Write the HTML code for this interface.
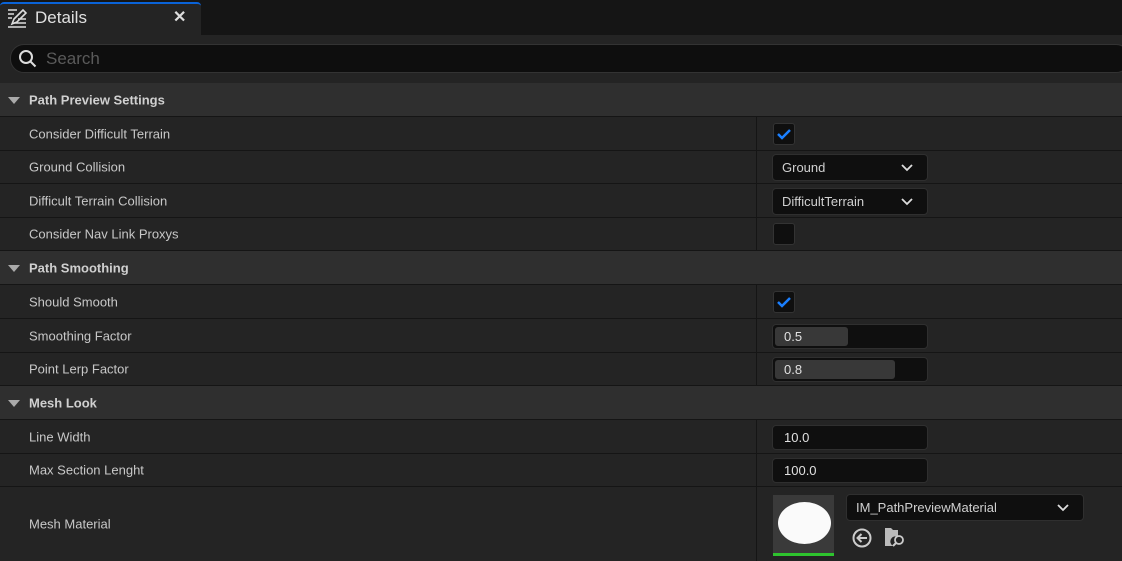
<!DOCTYPE html>
<html><head><style>
*{margin:0;padding:0;box-sizing:border-box}
body{width:1122px;height:561px;background:#151515;font-family:"Liberation Sans",sans-serif;overflow:hidden;position:relative;color:#c0c0c0}
.tab{position:absolute;left:0;top:2px;width:201px;height:33px;background:#242424;border-radius:4px 4px 0 0;border-top:2px solid #0a63d8}
.tab .t{position:absolute;left:35px;top:4px;font-size:17px;color:#e0e0e0}
.tab .x{position:absolute;left:173px;top:3px;font-size:16px;color:#ddd;font-weight:bold}
.sbar{position:absolute;left:0;top:35px;width:1122px;height:48px;background:#242424}
.sbox{position:absolute;left:10px;top:9px;width:1120px;height:29px;background:#0e0e0e;border:1px solid #333;border-radius:14px}
.sbox span{position:absolute;left:35px;top:4px;font-size:17px;color:#5a5a5a}
.row{position:absolute;left:0;width:1122px;background:#242424;border-bottom:1px solid #151515;font-size:13px}
.row .l{position:absolute;left:29px;top:50%;transform:translateY(-50%);color:#c8c8c8}
.row .d{position:absolute;left:756px;top:0;bottom:0;width:1px;background:#151515}
.hdr{background:#2f2f2f}
.hdr .l{font-weight:bold;color:#d0d0d0}
.tri{position:absolute;left:8px;top:50%;margin-top:-3px;width:0;height:0;border-left:6px solid transparent;border-right:6px solid transparent;border-top:7px solid #aaa}
.cb{position:absolute;left:773px;top:50%;margin-top:-11px;width:22px;height:22px;background:#0f0f0f;border:1px solid #333;border-radius:3px}
.dd{position:absolute;left:772px;top:50%;margin-top:-13px;width:156px;height:27px;background:#0f0f0f;border:1px solid #2f2f2f;border-radius:4px;color:#d0d0d0}
.dd span{position:absolute;left:9px;top:5px}
.dd svg{position:absolute;right:14px;top:9px}
.num{position:absolute;left:772px;top:50%;margin-top:-12px;width:156px;height:25px;background:#0f0f0f;border:1px solid #2f2f2f;border-radius:4px;color:#e0e0e0}
.num .f{position:absolute;left:2px;top:2px;bottom:2px;background:#383838;border-radius:3px}
.num span{position:absolute;left:11px;top:4px}
</style></head><body>
<div class="tab">
<svg style="position:absolute;left:6px;top:3px" width="22" height="22" viewBox="0 0 22 22" fill="none" stroke="#ddd" stroke-width="1.6"><path d="M2 3h9M2 7h6M2 11h4M2 20h18M8 16h12M12 12h8"/><path d="M6 17l2-5 9-9 3 3-9 9z"/></svg>
<div class="t">Details</div><div class="x">✕</div></div>
<div class="sbar"><div class="sbox">
<svg style="position:absolute;left:7px;top:4px" width="20" height="20" viewBox="0 0 20 20" fill="none" stroke="#ddd" stroke-width="2"><circle cx="8" cy="8" r="6"/><path d="M12.5 12.5l5 5"/></svg>
<span>Search</span></div></div>

<div class="row hdr" style="top:83px;height:34px"><div class="tri"></div><div class="l">Path Preview Settings</div></div>
<div class="row" style="top:117px;height:34px"><div class="l">Consider Difficult Terrain</div><div class="d"></div><div class="cb"><svg width="20" height="20" viewBox="0 0 20 20"><path d="M4 10l4 4 8-8" fill="none" stroke="#1a7fff" stroke-width="2.5"/></svg></div></div>
<div class="row" style="top:151px;height:33px"><div class="l">Ground Collision</div><div class="d"></div><div class="dd"><span>Ground</span><svg width="12" height="8" viewBox="0 0 12 8"><path d="M1 1l5 5 5-5" fill="none" stroke="#ddd" stroke-width="1.8"/></svg></div></div>
<div class="row" style="top:184px;height:34px"><div class="l">Difficult Terrain Collision</div><div class="d"></div><div class="dd"><span>DifficultTerrain</span><svg width="12" height="8" viewBox="0 0 12 8"><path d="M1 1l5 5 5-5" fill="none" stroke="#ddd" stroke-width="1.8"/></svg></div></div>
<div class="row" style="top:218px;height:33px"><div class="l">Consider Nav Link Proxys</div><div class="d"></div><div class="cb"></div></div>
<div class="row hdr" style="top:251px;height:34px"><div class="tri"></div><div class="l">Path Smoothing</div></div>
<div class="row" style="top:285px;height:34px"><div class="l">Should Smooth</div><div class="d"></div><div class="cb"><svg width="20" height="20" viewBox="0 0 20 20"><path d="M4 10l4 4 8-8" fill="none" stroke="#1a7fff" stroke-width="2.5"/></svg></div></div>
<div class="row" style="top:319px;height:34px"><div class="l">Smoothing Factor</div><div class="d"></div><div class="num"><div class="f" style="width:73px"></div><span>0.5</span></div></div>
<div class="row" style="top:353px;height:33px"><div class="l">Point Lerp Factor</div><div class="d"></div><div class="num"><div class="f" style="width:120px"></div><span>0.8</span></div></div>
<div class="row hdr" style="top:386px;height:34px"><div class="tri"></div><div class="l">Mesh Look</div></div>
<div class="row" style="top:420px;height:34px"><div class="l">Line Width</div><div class="d"></div><div class="num"><span>10.0</span></div></div>
<div class="row" style="top:454px;height:33px"><div class="l">Max Section Lenght</div><div class="d"></div><div class="num"><span>100.0</span></div></div>
<div class="row" style="top:487px;height:74px;border:none"><div class="l">Mesh Material</div><div class="d"></div>
<div style="position:absolute;left:773px;top:8px;width:61px;height:61px;background:#3a3a3a;border-bottom:3px solid #2ec32e">
<div style="position:absolute;left:5px;top:7px;width:53px;height:42px;background:#fafafa;border-radius:50%"></div></div>
<div class="dd" style="left:846px;top:20px;width:238px"><span>IM_PathPreviewMaterial</span><svg width="12" height="8" viewBox="0 0 12 8"><path d="M1 1l5 5 5-5" fill="none" stroke="#ddd" stroke-width="1.8"/></svg></div>
<svg style="position:absolute;left:851px;top:40px" width="22" height="22" viewBox="0 0 22 22" fill="none" stroke="#ccc" stroke-width="2"><circle cx="11" cy="11" r="8.5"/><path d="M16 11H7M10.5 7l-4 4 4 4"/></svg>
<svg style="position:absolute;left:884px;top:39px" width="22" height="22" viewBox="0 0 22 22"><path d="M1 2h6l2 2h5v7a5 5 0 0 0-5 9H1z" fill="#bbb"/><circle cx="15" cy="14" r="4" fill="none" stroke="#ccc" stroke-width="1.8"/><path d="M12 17l-3 3" stroke="#ccc" stroke-width="2"/></svg>
</div>
</body></html>
